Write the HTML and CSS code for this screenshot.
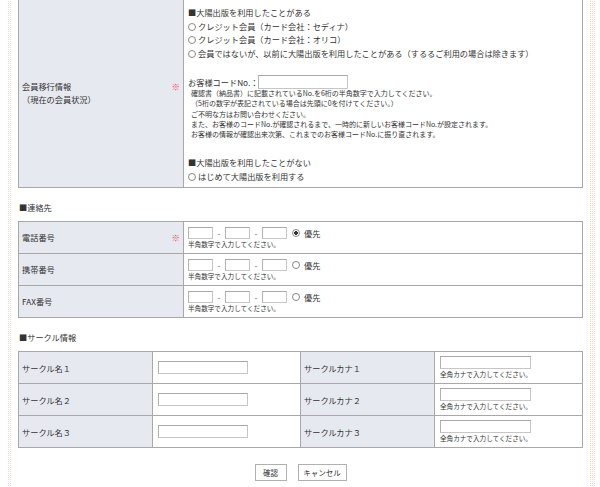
FILE: index.html
```html
<!DOCTYPE html>
<html lang="ja">
<head>
    <meta charset="UTF-8">
    <title>会員情報入力</title>
    <link rel="stylesheet" href="styles.css">
</head>
<body>
    <div class="frame">
        <div class="page">
            <table class="form-table status-table">
                <tr>
                    <th>
                        <div class="label">
                            <span>会員移行情報<br>（現在の会員状況）</span>
                            <span class="req">※</span>
                        </div>
                    </th>
                    <td class="status">
                        <p class="group-title">■大陽出版を利用したことがある</p>
                        <label class="opt"><input type="radio" name="status">クレジット会員（カード会社：セディナ）</label>
                        <label class="opt"><input type="radio" name="status">クレジット会員（カード会社：オリコ）</label>
                        <label class="opt"><input type="radio" name="status">会員ではないが、以前に大陽出版を利用したことがある（するるご利用の場合は除きます）</label>
                        <div class="code-row">
                            <span>お客様コードNo.：</span>
                            <input type="text" class="code-input">
                        </div>
                        <div class="notes">
                            <p>確認書（納品書）に記載されているNo.を6桁の半角数字で入力してください。</p>
                            <p>（5桁の数字が表記されている場合は先頭に0を付けてください。）</p>
                            <p>ご不明な方はお問い合わせください。</p>
                            <p>また、お客様のコードNo.が確認されるまで、一時的に新しいお客様コードNo.が設定されます。</p>
                            <p>お客様の情報が確認出来次第、これまでのお客様コードNo.に振り直されます。</p>
                        </div>
                        <p class="group-title second">■大陽出版を利用したことがない</p>
                        <label class="opt"><input type="radio" name="status">はじめて大陽出版を利用する</label>
                    </td>
                </tr>
            </table>

            <h2 class="section">■連絡先</h2>
            <table class="form-table contact-table">
                <tr>
                    <th><div class="label"><span>電話番号</span><span class="req">※</span></div></th>
                    <td>
                        <div class="tel-row">
                            <input type="text" class="tel-input"><span class="sep">-</span><input type="text" class="tel-input"><span class="sep">-</span><input type="text" class="tel-input">
                            <label class="prio"><input type="radio" name="prio" checked>優先</label>
                        </div>
                        <p class="hint">半角数字で入力してください。</p>
                    </td>
                </tr>
                <tr>
                    <th><div class="label"><span>携帯番号</span></div></th>
                    <td>
                        <div class="tel-row">
                            <input type="text" class="tel-input"><span class="sep">-</span><input type="text" class="tel-input"><span class="sep">-</span><input type="text" class="tel-input">
                            <label class="prio"><input type="radio" name="prio">優先</label>
                        </div>
                        <p class="hint">半角数字で入力してください。</p>
                    </td>
                </tr>
                <tr>
                    <th><div class="label"><span>FAX番号</span></div></th>
                    <td>
                        <div class="tel-row">
                            <input type="text" class="tel-input"><span class="sep">-</span><input type="text" class="tel-input"><span class="sep">-</span><input type="text" class="tel-input">
                            <label class="prio"><input type="radio" name="prio">優先</label>
                        </div>
                        <p class="hint">半角数字で入力してください。</p>
                    </td>
                </tr>
            </table>

            <h2 class="section">■サークル情報</h2>
            <table class="form-table circle-table">
                <colgroup>
                    <col class="c-label">
                    <col class="c-field">
                    <col class="c-label">
                    <col>
                </colgroup>
                <tr>
                    <th>サークル名１</th>
                    <td><input type="text" class="text-input"></td>
                    <th>サークルカナ１</th>
                    <td>
                        <input type="text" class="text-input kana">
                        <p class="hint">全角カナで入力してください。</p>
                    </td>
                </tr>
                <tr>
                    <th>サークル名２</th>
                    <td><input type="text" class="text-input"></td>
                    <th>サークルカナ２</th>
                    <td>
                        <input type="text" class="text-input kana">
                        <p class="hint">全角カナで入力してください。</p>
                    </td>
                </tr>
                <tr>
                    <th>サークル名３</th>
                    <td><input type="text" class="text-input"></td>
                    <th>サークルカナ３</th>
                    <td>
                        <input type="text" class="text-input kana">
                        <p class="hint">全角カナで入力してください。</p>
                    </td>
                </tr>
            </table>

            <div class="actions">
                <button type="submit" class="btn btn-confirm">確認</button>
                <button type="button" class="btn btn-cancel">キャンセル</button>
            </div>
        </div>
    </div>
</body>
</html>
```

FILE: styles.css
```css
* {
    margin: 0;
    padding: 0;
    box-sizing: border-box;
}

body {
    font-family: "Noto Sans CJK JP", sans-serif;
    font-size: 8.2px;
    color: #333;
    background: #fff;
}

/* 左右の黄色いドット帯 */
.frame {
    margin: 0 5px 0 7px;
    padding: 0 5px;
    min-height: 487px;
    background-image:
        linear-gradient(90deg, #fff 50%, transparent 50%),
        linear-gradient(#fff 50%, #f2df94 50%);
    background-size: 2px 2px;
}

.page {
    background: #fff;
    min-height: 487px;
    padding: 0 7px 0 6px;
    overflow: hidden;
}

/* テーブル共通 */
.form-table {
    width: 100%;
    border-collapse: collapse;
    border: 1px solid #999;
}

.form-table th,
.form-table td {
    border: 1px solid #a8a8a8;
    font-weight: normal;
    text-align: left;
    vertical-align: middle;
}

.form-table th {
    background: #e7e9f0;
    padding: 0 3px;
}

.form-table td {
    padding: 0 4px;
}

.label {
    display: flex;
    justify-content: space-between;
    align-items: flex-start;
    line-height: 13px;
}

.req {
    color: #ee4f4f;
    font-size: 8.5px;
}

/* 会員移行情報 */
.status-table {
    margin-top: -3px;
}

.status-table th {
    width: 165px;
}

.form-table td.status {
    padding: 8px 4px 4px 4px;
}

.group-title,
.opt {
    display: block;
    line-height: 13.5px;
}

.group-title.second {
    margin-top: 17px;
}

.opt input[type="radio"],
.prio input[type="radio"] {
    appearance: none;
    -webkit-appearance: none;
    width: 8px;
    height: 8px;
    border: 1px solid #8a8a8a;
    border-radius: 50%;
    background: #fff;
    vertical-align: -1px;
    margin-right: 2px;
}

.prio input[type="radio"]:checked {
    background: radial-gradient(circle, #333 1.6px, #fff 2px);
}

.code-row {
    display: flex;
    align-items: center;
    height: 14px;
    margin-top: 15px;
}

.code-input {
    width: 90px;
    height: 14px;
}

.notes {
    margin-top: -1px;
    padding-left: 3px;
    font-size: 7px;
    line-height: 10.25px;
}

input[type="text"] {
    border: 1px solid #c6c6c6;
    border-top-color: #a9a9a9;
    border-left-color: #b2b2b2;
    background: #fff;
    font-size: 8px;
}

/* 見出し */
.section {
    font-size: 8.2px;
    font-weight: normal;
    line-height: 14px;
    margin: 12px 0 7px 1px;
}

/* 連絡先 */
.contact-table th {
    width: 165px;
    height: 32px;
}

.tel-row {
    display: flex;
    align-items: center;
    height: 12px;
}

.tel-input {
    width: 25px;
    height: 12px;
}

.sep {
    display: inline-block;
    width: 12px;
    text-align: center;
    font-size: 7px;
}

.prio {
    margin-left: 5px;
    display: flex;
    align-items: center;
}

.prio input[type="radio"] {
    vertical-align: 0;
    margin-right: 4px;
}

.hint {
    font-size: 6.6px;
    line-height: 10px;
}

/* サークル情報 */
.circle-table .c-label {
    width: 134px;
}

.circle-table .c-field {
    width: 148px;
}

.circle-table th,
.circle-table td {
    height: 32px;
}

.circle-table td {
    padding: 0 4px 0 5px;
}

.text-input {
    display: block;
    width: 90px;
    height: 13px;
}

.text-input.kana {
    width: 91px;
}

/* ボタン */
.actions {
    display: flex;
    justify-content: center;
    gap: 11px;
    margin-top: 16px;
}

.btn {
    height: 17px;
    background: #fff;
    border: 1px solid #b0b0b0;
    font-family: inherit;
    font-size: 7.5px;
    color: #333;
    cursor: pointer;
}

.btn-confirm {
    width: 32px;
}

.btn-cancel {
    width: 49px;
}
```
